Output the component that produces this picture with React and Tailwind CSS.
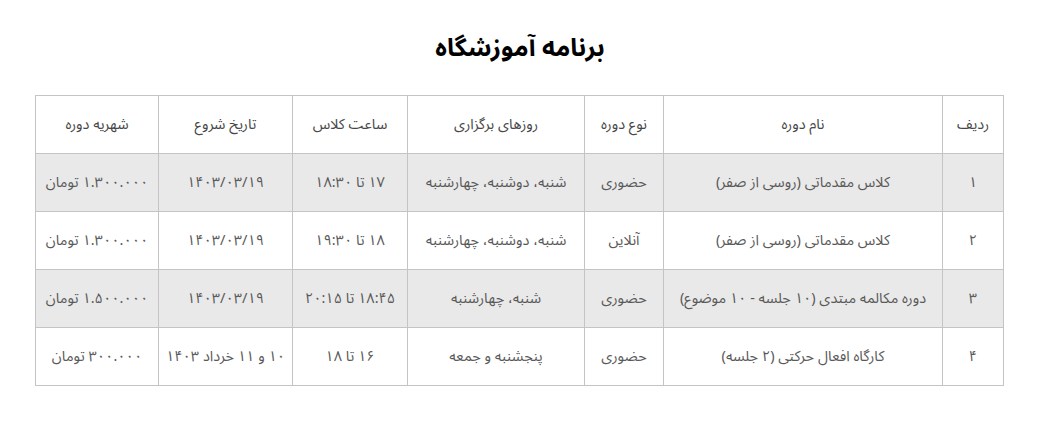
import React from "react";

const rows = [
    {
        id: "۱",
        name: "کلاس مقدماتی (روسی از صفر)",
        type: "حضوری",
        days: "شنبه، دوشنبه، چهارشنبه",
        time: "۱۷ تا ۱۸:۳۰",
        start: "۱۴۰۳/۰۳/۱۹",
        price: "۱.۳۰۰.۰۰۰ تومان",
    },
    {
        id: "۲",
        name: "کلاس مقدماتی (روسی از صفر)",
        type: "آنلاین",
        days: "شنبه، دوشنبه، چهارشنبه",
        time: "۱۸ تا ۱۹:۳۰",
        start: "۱۴۰۳/۰۳/۱۹",
        price: "۱.۳۰۰.۰۰۰ تومان",
    },
    {
        id: "۳",
        name: "دوره مکالمه مبتدی (۱۰ جلسه - ۱۰ موضوع)",
        type: "حضوری",
        days: "شنبه، چهارشنبه",
        time: "۱۸:۴۵ تا ۲۰:۱۵",
        start: "۱۴۰۳/۰۳/۱۹",
        price: "۱.۵۰۰.۰۰۰ تومان",
    },
    {
        id: "۴",
        name: "کارگاه افعال حرکتی (۲ جلسه)",
        type: "حضوری",
        days: "پنجشنبه و جمعه",
        time: "۱۶ تا ۱۸",
        start: "۱۰ و ۱۱ خرداد ۱۴۰۳",
        price: "۳۰۰.۰۰۰ تومان",
    },
];

const headers = [
    "ردیف",
    "نام دوره",
    "نوع دوره",
    "روزهای برگزاری",
    "ساعت کلاس",
    "تاریخ شروع",
    "شهریه دوره",
];

export default function App() {
    return (
        <div
            dir="rtl"
            className="min-h-[442px] bg-white pt-[28px]"
            style={{ fontFamily: '"Noto Sans Arabic", "DejaVu Sans", sans-serif' }}
        >
            <div className="mr-[60px] w-[968px]">
                <h1 className="text-center text-[25px] font-bold leading-[40px] text-black">
                    برنامه آموزشگاه
                </h1>

                <table className="mt-[27px] w-[968px] table-fixed border-collapse text-[14.5px] text-[#595959]">
                    <colgroup>
                        <col className="w-[61px]" />
                        <col className="w-[279px]" />
                        <col className="w-[79px]" />
                        <col className="w-[177px]" />
                        <col className="w-[115px]" />
                        <col className="w-[134px]" />
                        <col className="w-[123px]" />
                    </colgroup>
                    <thead>
                        <tr className="h-[58px]">
                            {headers.map((h) => (
                                <th
                                    key={h}
                                    className="border border-[#c4c4c4] text-center font-normal text-[#474747]"
                                >
                                    {h}
                                </th>
                            ))}
                        </tr>
                    </thead>
                    <tbody>
                        {rows.map((r, i) => (
                            <tr
                                key={r.id}
                                className={
                                    i % 2 === 0
                                        ? "h-[58px] bg-[#e9e9e9]"
                                        : "h-[58px] bg-white"
                                }
                            >
                                <td className="border border-[#c4c4c4] text-center">{r.id}</td>
                                <td className="border border-[#c4c4c4] text-center">{r.name}</td>
                                <td className="border border-[#c4c4c4] text-center">{r.type}</td>
                                <td className="border border-[#c4c4c4] text-center">{r.days}</td>
                                <td className="border border-[#c4c4c4] text-center">{r.time}</td>
                                <td className="border border-[#c4c4c4] text-center">{r.start}</td>
                                <td className="border border-[#c4c4c4] text-center">{r.price}</td>
                            </tr>
                        ))}
                    </tbody>
                </table>
            </div>
        </div>
    );
}
